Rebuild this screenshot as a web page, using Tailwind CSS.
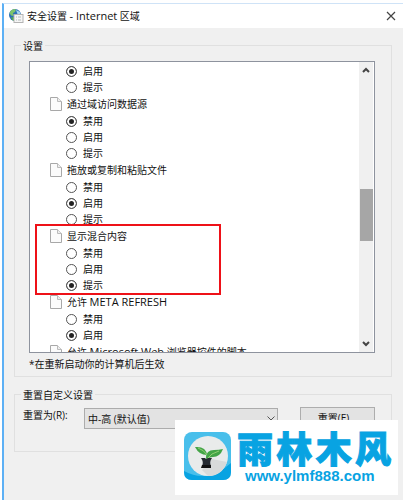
<!DOCTYPE html>
<html lang="zh-CN">
<head>
<meta charset="utf-8">
<meta name="viewport" content="width=device-width, initial-scale=1">
<title>安全设置 - Internet 区域</title>
<script src="https://cdn.jsdelivr.net/npm/@tailwindcss/browser@4"></script>
</head>
<body class="min-h-screen bg-white pt-[3px] pl-[2px] font-['Open_Sans','Noto_Sans_CJK_SC',sans-serif] text-[10px] leading-4 text-[#111]">
<svg class="hidden" aria-hidden="true">
  <symbol id="page" viewBox="0 0 12 14">
    <path d="M.5.5h7l4 4v9H.5z" fill="#fbfbfb" stroke="#a8a8a8"/>
    <path d="M7.5.5v4h4" fill="#eee" stroke="#bbb"/>
  </symbol>
</svg>

<main class="relative flex min-h-[calc(100vh-3px)] flex-col border-t border-l-2 border-t-[#cfe3f7] border-l-[#5cb0f5] bg-[#f0f0f0]">
  <header class="flex h-6 items-center bg-white pr-1 pl-1">
    <svg class="h-4 w-4 shrink-0" viewBox="0 0 16 16" aria-hidden="true">
      <circle cx="7" cy="7" r="6" fill="#2b6fb5"/>
      <path d="M3 2.500Q6 0 8 1.500L7 4 5 5 5.500 8 3 7.500 1.500 5z" fill="#7cc46a"/>
      <path d="M8 2l4 2 .5 3-3-1z" fill="#a5d6ee"/>
      <path d="M3 9l3 .5V13Q3.500 12 3 9z" fill="#58a94c"/>
      <rect x="6" y="6.500" width="9" height="8" fill="#f6f6f6" stroke="#b4b4b4"/>
      <path d="M8 9h1m1 0h3M8 12h1m1 0h3" stroke="#b5bcbc"/>
    </svg>
    <h1 class="ml-[3px] flex-1 whitespace-nowrap">安全设置 <span class="text-[11px]">- Internet</span> 区域</h1>
    <button type="button" aria-label="关闭" class="flex h-4 w-4 items-center justify-center">
      <svg class="h-[10px] w-[10px]" viewBox="0 0 10 10" fill="none" stroke="#444" stroke-width="1.200"><path d="M1 1l8 8M9 1l-8 8"/></svg>
    </button>
  </header>

  <section class="mt-[17px] mr-[11px] ml-[10px] border border-[#e0e0e0] px-[14px]" aria-labelledby="settings-title">
    <h2 id="settings-title" class="-mt-2 -ml-2 h-4 w-fit bg-[#f0f0f0] px-0.5">设置</h2>
    <div class="mt-[7px] mr-[2px] flex h-[292px] border border-[#8e939e] bg-white">
      <div class="flex-1 overflow-hidden pt-px pl-5">
        <fieldset>
          <label class="flex h-4 items-center gap-1.5 pl-4"><input type="radio" name="g0" checked class="h-[11px] w-[11px] shrink-0 appearance-none rounded-full border border-[#555] bg-white checked:bg-[#222] checked:shadow-[inset_0_0_0_2px_white]">启用</label>
          <label class="flex h-4 items-center gap-1.5 pl-4"><input type="radio" name="g0" class="h-[11px] w-[11px] shrink-0 appearance-none rounded-full border border-[#555] bg-white checked:bg-[#222] checked:shadow-[inset_0_0_0_2px_white]">提示</label>
        </fieldset>
        <fieldset>
          <legend class="flex h-[18px] items-center gap-[5px]"><svg class="h-[14px] w-3"><use href="#page"/></svg>通过域访问数据源</legend>
          <label class="flex h-4 items-center gap-1.5 pl-4"><input type="radio" name="g1" checked class="h-[11px] w-[11px] shrink-0 appearance-none rounded-full border border-[#555] bg-white checked:bg-[#222] checked:shadow-[inset_0_0_0_2px_white]">禁用</label>
          <label class="flex h-4 items-center gap-1.5 pl-4"><input type="radio" name="g1" class="h-[11px] w-[11px] shrink-0 appearance-none rounded-full border border-[#555] bg-white checked:bg-[#222] checked:shadow-[inset_0_0_0_2px_white]">启用</label>
          <label class="flex h-4 items-center gap-1.5 pl-4"><input type="radio" name="g1" class="h-[11px] w-[11px] shrink-0 appearance-none rounded-full border border-[#555] bg-white checked:bg-[#222] checked:shadow-[inset_0_0_0_2px_white]">提示</label>
        </fieldset>
        <fieldset>
          <legend class="flex h-[18px] items-center gap-[5px]"><svg class="h-[14px] w-3"><use href="#page"/></svg>拖放或复制和粘贴文件</legend>
          <label class="flex h-4 items-center gap-1.5 pl-4"><input type="radio" name="g2" class="h-[11px] w-[11px] shrink-0 appearance-none rounded-full border border-[#555] bg-white checked:bg-[#222] checked:shadow-[inset_0_0_0_2px_white]">禁用</label>
          <label class="flex h-4 items-center gap-1.5 pl-4"><input type="radio" name="g2" checked class="h-[11px] w-[11px] shrink-0 appearance-none rounded-full border border-[#555] bg-white checked:bg-[#222] checked:shadow-[inset_0_0_0_2px_white]">启用</label>
          <label class="flex h-4 items-center gap-1.5 pl-4"><input type="radio" name="g2" class="h-[11px] w-[11px] shrink-0 appearance-none rounded-full border border-[#555] bg-white checked:bg-[#222] checked:shadow-[inset_0_0_0_2px_white]">提示</label>
        </fieldset>
        <div class="relative">
          <fieldset>
            <legend class="flex h-[18px] items-center gap-[5px]"><svg class="h-[14px] w-3"><use href="#page"/></svg>显示混合内容</legend>
            <label class="flex h-4 items-center gap-1.5 pl-4"><input type="radio" name="g3" class="h-[11px] w-[11px] shrink-0 appearance-none rounded-full border border-[#555] bg-white checked:bg-[#222] checked:shadow-[inset_0_0_0_2px_white]">禁用</label>
            <label class="flex h-4 items-center gap-1.5 pl-4"><input type="radio" name="g3" class="h-[11px] w-[11px] shrink-0 appearance-none rounded-full border border-[#555] bg-white checked:bg-[#222] checked:shadow-[inset_0_0_0_2px_white]">启用</label>
            <label class="flex h-4 items-center gap-1.5 pl-4"><input type="radio" name="g3" checked class="h-[11px] w-[11px] shrink-0 appearance-none rounded-full border border-[#555] bg-white checked:bg-[#222] checked:shadow-[inset_0_0_0_2px_white]">提示</label>
          </fieldset>
          <div class="pointer-events-none absolute -top-[3px] -bottom-[2px] -left-[15px] w-[186px] border-2 border-[#ee1118]"></div>
        </div>
        <fieldset>
          <legend class="flex h-[18px] items-center gap-[5px]"><svg class="h-[14px] w-3"><use href="#page"/></svg><span>允许 <span class="text-[11px]">META REFRESH</span></span></legend>
          <label class="flex h-4 items-center gap-1.5 pl-4"><input type="radio" name="g4" class="h-[11px] w-[11px] shrink-0 appearance-none rounded-full border border-[#555] bg-white checked:bg-[#222] checked:shadow-[inset_0_0_0_2px_white]">禁用</label>
          <label class="flex h-4 items-center gap-1.5 pl-4"><input type="radio" name="g4" checked class="h-[11px] w-[11px] shrink-0 appearance-none rounded-full border border-[#555] bg-white checked:bg-[#222] checked:shadow-[inset_0_0_0_2px_white]">启用</label>
        </fieldset>
        <div class="flex h-[18px] items-center gap-[5px] whitespace-nowrap"><svg class="h-[14px] w-3"><use href="#page"/></svg><span>允许 <span class="text-[11px]">Microsoft Web</span> 浏览器控件的脚本</span></div>
      </div>
      <div class="mr-px flex w-[14px] flex-col items-center bg-[#f0f0f0]">
        <button type="button" aria-label="向上滚动" class="flex h-4 w-full items-center justify-center"><svg class="h-[6px] w-2" viewBox="0 0 8 6" fill="none" stroke="#444" stroke-width="2"><path d="M1 5l3-3 3 3"/></svg></button>
        <div class="mt-[111px] h-[52px] w-[13px] bg-[#a6a6a6]"></div>
        <button type="button" aria-label="向下滚动" class="mt-auto flex h-4 w-full items-center justify-center"><svg class="h-[6px] w-2" viewBox="0 0 8 6" fill="none" stroke="#444" stroke-width="2"><path d="M1 1l3 3 3-3"/></svg></button>
      </div>
    </div>
    <p class="mt-[3px] pb-1">*在重新启动你的计算机后生效</p>
  </section>

  <section class="mt-[17px] mr-[11px] ml-[10px] border border-[#e0e0e0] pr-[14px] pb-[22px] pl-2" aria-labelledby="reset-title">
    <h2 id="reset-title" class="-mt-2 -ml-0.5 h-4 w-fit bg-[#f0f0f0] px-0.5">重置自定义设置</h2>
    <div class="mt-1 mr-[2px] flex items-start">
      <label for="level" class="w-[61px] whitespace-nowrap">重置为(R):</label>
      <div class="relative mt-px flex-1">
        <select id="level" class="h-[21px] w-full appearance-none border border-[#acacac] bg-[#e3e3e3] px-[3px] leading-4"><option>中-高 (默认值)</option></select>
        <svg class="pointer-events-none absolute top-2 right-[3px] h-[5px] w-2" viewBox="0 0 8 5" fill="none" stroke="#555"><path d="M.5.5L4 4 7.500.5"/></svg>
      </div>
      <button type="button" class="ml-[22px] h-[22px] w-[75px] border border-[#adadad] bg-[#e3e3e3]">重置(E)...</button>
    </div>
  </section>

  <aside class="absolute right-[5px] bottom-[5px] flex h-[75px] w-[223px] items-start bg-white pt-3 pl-[9px]">
    <svg class="h-12 w-[47px] shrink-0" viewBox="0 0 47 48" aria-hidden="true">
      <rect width="47" height="48" rx="8" fill="#49bfeb"/>
      <path d="M0 39Q24 52 47 31v9q0 8-8 8H8q-8 0-8-8z" fill="#08a3e2"/>
      <circle cx="24" cy="24" r="20" fill="#e9ebeb"/>
      <path d="M28 27l15 3Q38 44 24 44l-6-6z" fill="#d8dada"/>
      <path d="M11 15q11-1 12 8-8 0-12-8z" fill="#43a447"/>
      <path d="M22 26q0-8 8-8 5 0 9-1-3 8-10 8-4 0-6 3z" fill="#43a447"/>
      <path d="M23 27Q27 21 35 19M14 16q6 2 9 7" fill="none" stroke="#8fcd72"/>
      <path d="M17 26h4l1 1 2-1h4q-3 4-1 8v2h-9v-2q2-4-1-8z" fill="#252a31"/>
      <path d="M18 33h9v3H17z" fill="#111"/>
    </svg>
    <div class="ml-[6px] flex-1 text-[#08a3e2]">
      <p class="flex w-[154px] justify-between text-[36px] leading-9 font-black [-webkit-text-stroke:1px_#08a3e2]"><span>雨</span><span>林</span><span>木</span><span>风</span></p>
      <p class="pl-2 font-['Liberation_Sans_Narrow','Liberation_Sans',sans-serif] text-[15px] leading-4 font-bold">www.ylmf888.com</p>
    </div>
  </aside>
</main>
</body>
</html>
